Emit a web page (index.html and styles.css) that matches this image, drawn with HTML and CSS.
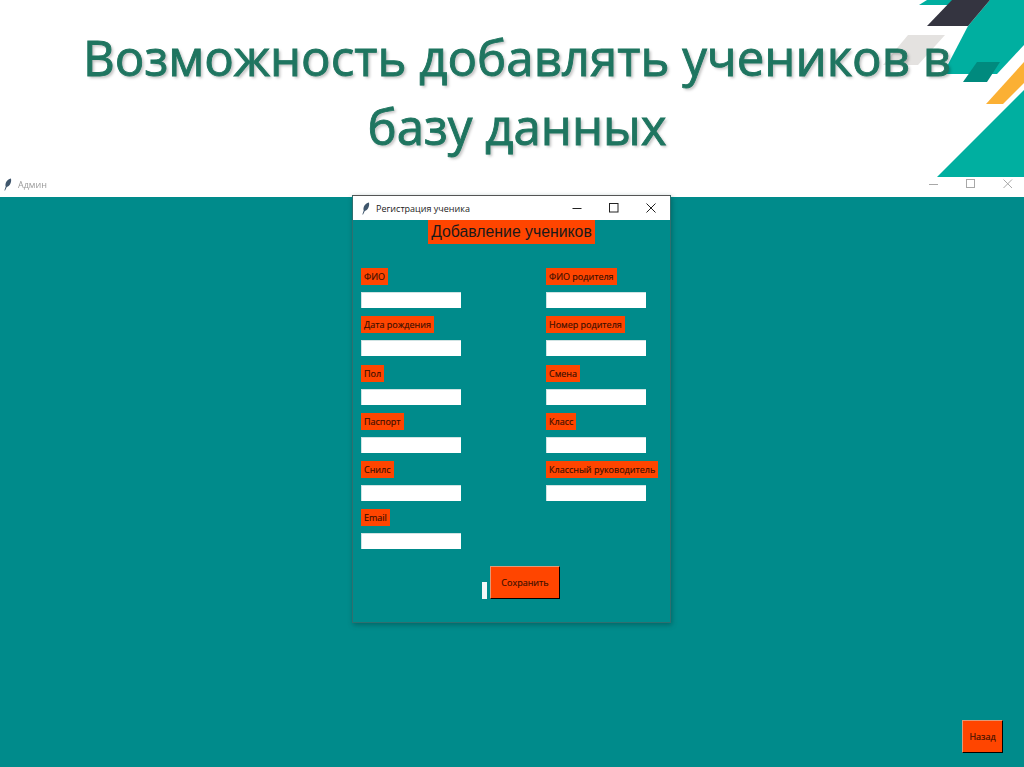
FILE: index.html
```html
<!DOCTYPE html>
<html lang="ru">
<head>
<meta charset="utf-8">
<title>Возможность добавлять учеников в базу данных</title>
<link rel="stylesheet" href="styles.css">
</head>
<body>
<header class="slide">
  <svg class="deco" viewBox="0 0 144 178" width="144" height="178" aria-hidden="true">
    <polygon class="d-gray" points="28,35 65,35 38,65 3,65"/>
    <polygon class="d-teal" points="39,5 47,0 75,0 68,5"/>
    <polygon class="d-teal" points="63,74 88,26 110,0 144,0 144,45 117,74"/>
    <polygon class="d-dark" points="47,26 72,0 110,0 88,26"/>
    <polygon class="d-deep" points="83,82 97,62 120,62 107,82"/>
    <polygon class="d-orange" points="106,104 144,62 144,83 123,104"/>
    <polygon class="d-teal" points="57,177 144,90 144,177"/>
  </svg>
  <h1 class="slide-title">Возможность добавлять учеников в базу данных</h1>
  <div class="appbar">
    <svg class="feather" viewBox="0 0 10 14" width="9" height="13" aria-hidden="true"><path d="M1.500 13.800 L3 9.300 C2 6 4 1.500 8.800 .3 C9.800 4 8 8.500 4.200 9.800 L2.300 13.800 Z"/></svg>
    <span class="appbar-title">Админ</span>
    <span class="appbar-controls">
      <svg viewBox="0 0 10 10" width="10" height="10" aria-hidden="true"><path d="M0 5.500H9"/></svg>
      <svg viewBox="0 0 10 10" width="10" height="10" aria-hidden="true"><rect x=".5" y=".5" width="8" height="8"/></svg>
      <svg viewBox="0 0 10 10" width="10" height="10" aria-hidden="true"><path d="M.5 .5L9 9M9 .5L.5 9"/></svg>
    </span>
  </div>
</header>

<main class="desktop">
  <section class="window">
    <div class="titlebar">
      <svg class="feather" viewBox="0 0 10 14" width="9" height="13" aria-hidden="true"><path d="M1.500 13.800 L3 9.300 C2 6 4 1.500 8.800 .3 C9.800 4 8 8.500 4.200 9.800 L2.300 13.800 Z"/></svg>
      <span class="window-title">Регистрация ученика</span>
      <span class="window-controls">
        <svg viewBox="0 0 10 10" width="10" height="10" aria-hidden="true"><path d="M.5 5.500H9.500"/></svg>
        <svg viewBox="0 0 10 10" width="10" height="10" aria-hidden="true"><rect x=".5" y=".5" width="8.500" height="8.500"/></svg>
        <svg viewBox="0 0 10 10" width="10" height="10" aria-hidden="true"><path d="M.5 .5L9.500 9.500M9.500 .5L.5 9.500"/></svg>
      </span>
    </div>
    <div class="window-body">
      <h2 class="form-title">Добавление учеников</h2>
      <div class="form-grid">
        <div class="col">
          <div class="field"><span class="tag">ФИО</span><span class="entry"></span></div>
          <div class="field"><span class="tag">Дата рождения</span><span class="entry"></span></div>
          <div class="field"><span class="tag">Пол</span><span class="entry"></span></div>
          <div class="field"><span class="tag">Паспорт</span><span class="entry"></span></div>
          <div class="field"><span class="tag">Снилс</span><span class="entry"></span></div>
          <div class="field"><span class="tag">Email</span><span class="entry"></span></div>
        </div>
        <div class="col">
          <div class="field"><span class="tag">ФИО родителя</span><span class="entry"></span></div>
          <div class="field"><span class="tag">Номер родителя</span><span class="entry"></span></div>
          <div class="field"><span class="tag">Смена</span><span class="entry"></span></div>
          <div class="field"><span class="tag">Класс</span><span class="entry"></span></div>
          <div class="field"><span class="tag">Классный руководитель</span><span class="entry"></span></div>
        </div>
      </div>
      <div class="actions">
        <span class="sliver"></span>
        <button class="btn btn-save" type="button">Сохранить</button>
      </div>
    </div>
  </section>
  <button class="btn btn-back" type="button">Назад</button>
</main>
</body>
</html>
```

FILE: styles.css
```css
* { box-sizing: border-box; }

html, body { margin: 0; height: 100%; }

body {
  display: flex;
  flex-direction: column;
  height: 767px;
  overflow: hidden;
  background: #008b8b;
  font-family: "Liberation Sans", Arial, sans-serif;
}

.slide {
  position: relative;
  display: flex;
  flex-direction: column;
  height: 197px;
  background: #fff;
}

.deco {
  position: absolute;
  top: 0;
  right: 0;
  filter: blur(.4px);
}

.d-teal { fill: #00afa0; }
.d-dark { fill: #343440; }
.d-deep { fill: #008a7e; }
.d-orange { fill: #fbb034; }
.d-gray { fill: #e4e2e0; }

.slide-title {
  position: relative;
  flex: 1;
  margin: 0;
  padding: 23px 56px 0 66px;
  font-family: "Open Sans", "Noto Sans", sans-serif;
  font-size: 49.2px;
  font-weight: 400;
  line-height: 68.5px;
  text-align: center;
  color: #1f7560;
  text-shadow: 2px 2px 3px rgba(0, 0, 0, .25);
  -webkit-text-stroke: .9px #1f7560;
  filter: blur(.4px);
}

.appbar {
  position: relative;
  display: flex;
  align-items: center;
  height: 20px;
  padding: 0 11px 6px 3px;
  filter: blur(.3px);
}

.feather { fill: #3f566c; flex: none; }

.appbar-title {
  margin-left: 6px;
  font-size: 9px;
  font-family: "Open Sans", sans-serif;
  color: #9a9a9a;
}

.appbar-controls {
  margin-left: auto;
  display: flex;
  gap: 27px;
}

.appbar-controls svg { fill: none; stroke: #a8a8a8; stroke-width: 1; }

.desktop {
  position: relative;
  flex: 1;
}

.window {
  position: absolute;
  left: 352px;
  top: -2px;
  width: 319px;
  height: 428px;
  display: flex;
  flex-direction: column;
  border: 1px solid #2f6f6f;
  border-top-color: #555;
  box-shadow: 1px 2px 5px rgba(0, 60, 60, .45);
}

.titlebar {
  display: flex;
  align-items: center;
  flex: none;
  height: 24px;
  padding: 0 14px 0 8px;
  background: #fff;
}

.window-title {
  margin-left: 6px;
  font-family: "Open Sans", sans-serif;
  font-size: 9px;
  color: #222;
}

.window-controls {
  margin-left: auto;
  display: flex;
  gap: 27px;
}

.window-controls svg { fill: none; stroke: #222; stroke-width: 1; }

.window-body {
  flex: 1;
  display: flex;
  flex-direction: column;
  background: #008b8b;
}

.form-title {
  align-self: center;
  margin: 0;
  padding: 0 3.5px;
  height: 24px;
  font-size: 15.8px;
  font-weight: 400;
  line-height: 24px;
  background: #ff4500;
  color: #1a1a1a;
}

.form-grid {
  display: grid;
  grid-template-columns: 185px 1fr;
  margin-top: 24px;
  padding-left: 8px;
}

.col {
  display: flex;
  flex-direction: column;
}

.field {
  display: flex;
  flex-direction: column;
  align-items: flex-start;
  gap: 7px;
  height: 48.3px;
}

.tag {
  height: 17px;
  padding: 0 3px;
  font-family: "Open Sans", sans-serif;
  font-size: 9px;
  line-height: 17px;
  background: #ff4500;
  color: #3a0f00;
  white-space: nowrap;
  -webkit-text-stroke: .15px #3a0f00;
}

.entry {
  width: 100px;
  height: 16px;
  background: #fff;
  border-top: 1px solid #cfe3e3;
  border-left: 1px solid #cfe3e3;
}

.actions {
  display: flex;
  align-items: flex-end;
  margin-top: 8px;
  padding-left: 129px;
  gap: 3px;
}

.sliver {
  width: 5px;
  height: 17px;
  background: #f4f8f8;
}

.btn {
  padding: 0;
  font-family: "Open Sans", sans-serif;
  font-size: 9px;
  background: #ff4500;
  color: #3a0f00;
  border: 1px solid;
  border-color: #e09a78 #000 #000 #e09a78;
  -webkit-text-stroke: .15px #3a0f00;
}

.btn-save {
  width: 70px;
  height: 33px;
}

.btn-back {
  position: absolute;
  right: 21px;
  bottom: 14px;
  width: 41px;
  height: 33px;
}
```
